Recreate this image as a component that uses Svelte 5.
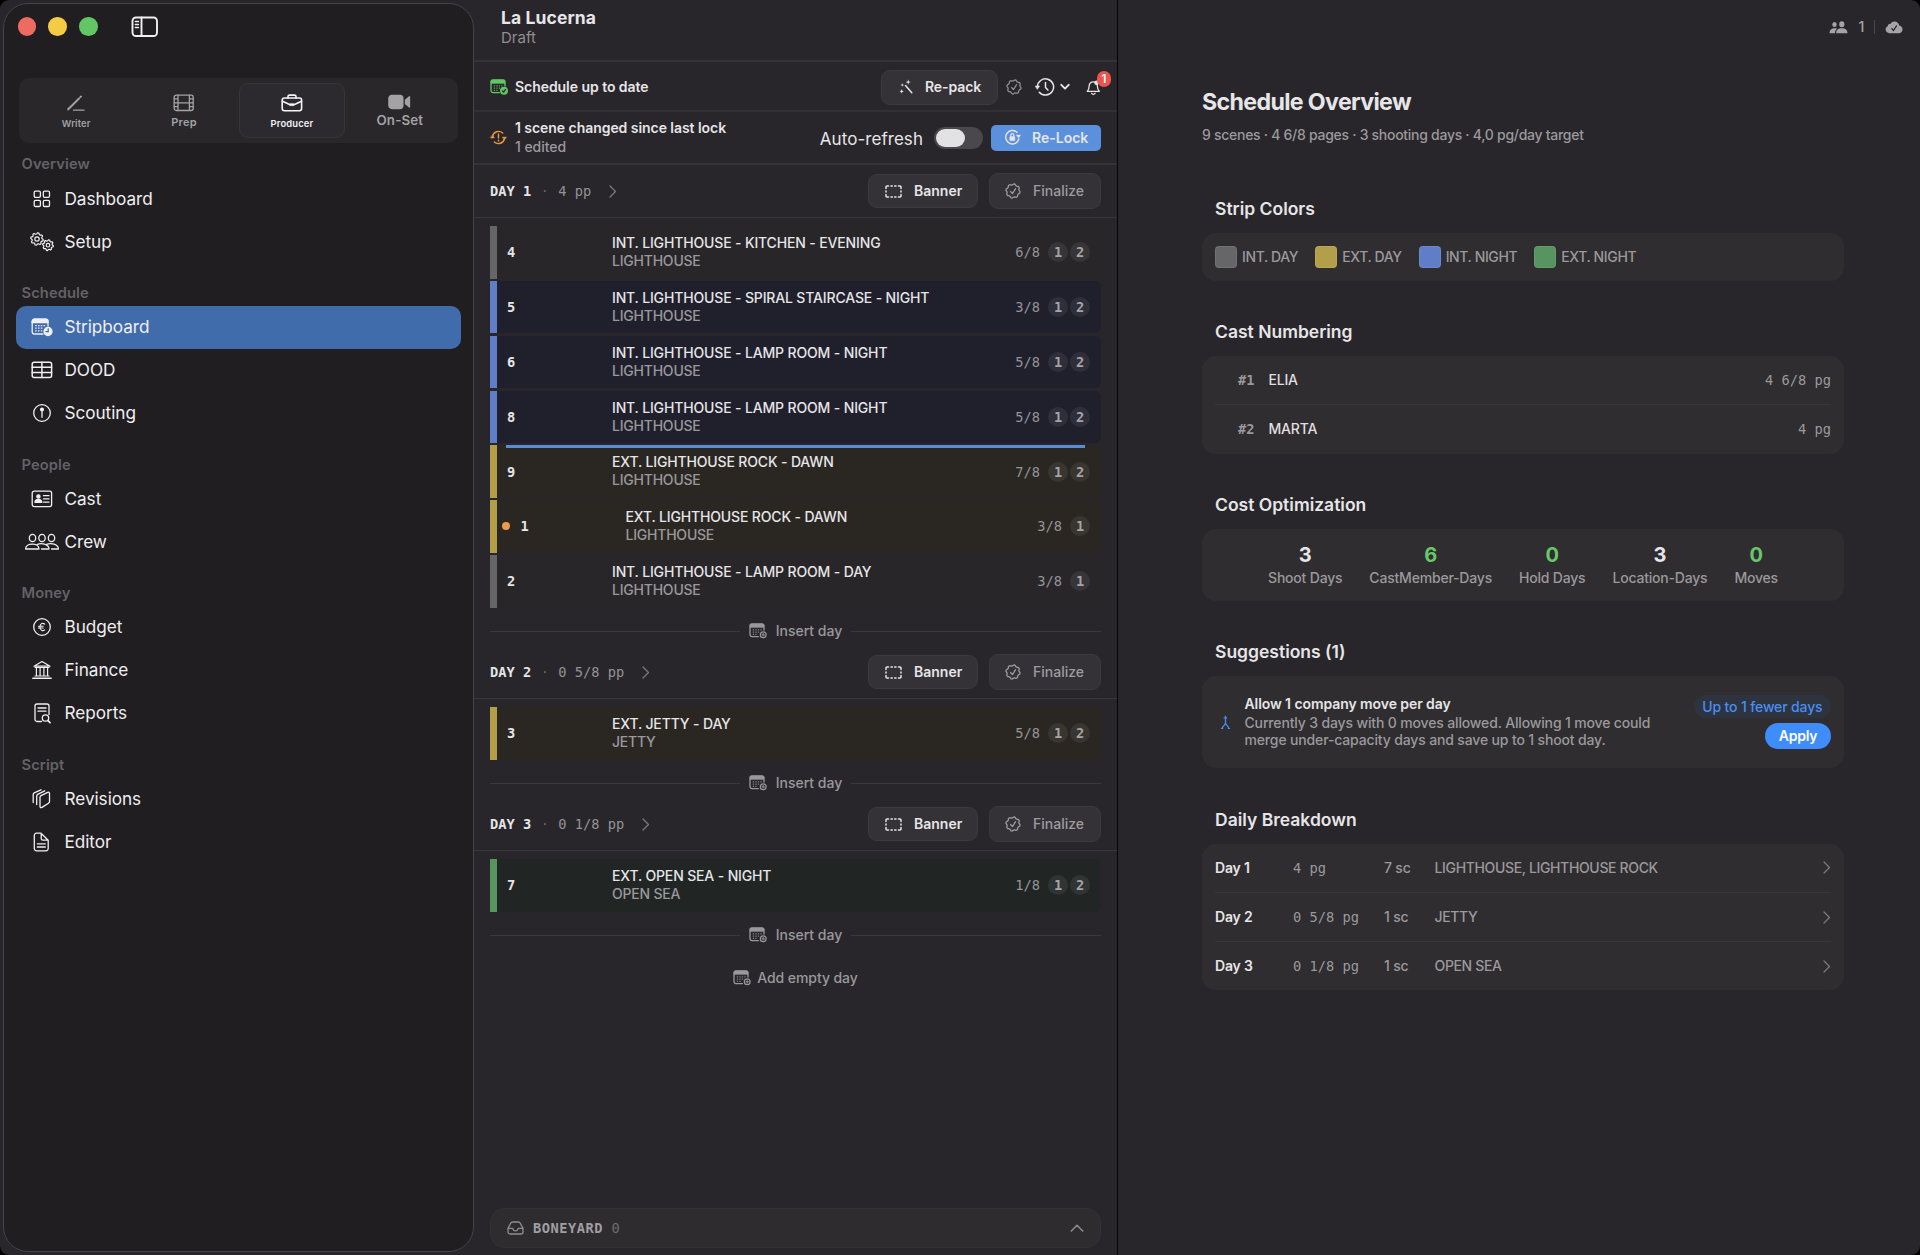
<script lang="ts">
  type Strip = {
    scene: string;
    title: string;
    location: string;
    pages: string;
    cast: number[];
    kind: 'int-day' | 'ext-day' | 'int-night' | 'ext-night';
    edited?: boolean;
    marker?: boolean;
  };

  const modes = [
    { id: 'writer', label: 'Writer' },
    { id: 'prep', label: 'Prep' },
    { id: 'producer', label: 'Producer' },
    { id: 'onset', label: 'On-Set' }
  ];

  const sections = [
    { title: 'Overview', items: ['Dashboard', 'Setup'] },
    { title: 'Schedule', items: ['Stripboard', 'DOOD', 'Scouting'] },
    { title: 'People', items: ['Cast', 'Crew'] },
    { title: 'Money', items: ['Budget', 'Finance', 'Reports'] },
    { title: 'Script', items: ['Revisions', 'Editor'] }
  ];

  const days: { name: string; pages: string; strips: Strip[] }[] = [
    {
      name: 'DAY 1',
      pages: '4 pp',
      strips: [
        { scene: '4', title: 'INT. LIGHTHOUSE - KITCHEN - EVENING', location: 'LIGHTHOUSE', pages: '6/8', cast: [1, 2], kind: 'int-day' },
        { scene: '5', title: 'INT. LIGHTHOUSE - SPIRAL STAIRCASE - NIGHT', location: 'LIGHTHOUSE', pages: '3/8', cast: [1, 2], kind: 'int-night' },
        { scene: '6', title: 'INT. LIGHTHOUSE - LAMP ROOM - NIGHT', location: 'LIGHTHOUSE', pages: '5/8', cast: [1, 2], kind: 'int-night' },
        { scene: '8', title: 'INT. LIGHTHOUSE - LAMP ROOM - NIGHT', location: 'LIGHTHOUSE', pages: '5/8', cast: [1, 2], kind: 'int-night' },
        { scene: '9', title: 'EXT. LIGHTHOUSE ROCK - DAWN', location: 'LIGHTHOUSE', pages: '7/8', cast: [1, 2], kind: 'ext-day', marker: true },
        { scene: '1', title: 'EXT. LIGHTHOUSE ROCK - DAWN', location: 'LIGHTHOUSE', pages: '3/8', cast: [1], kind: 'ext-day', edited: true },
        { scene: '2', title: 'INT. LIGHTHOUSE - LAMP ROOM - DAY', location: 'LIGHTHOUSE', pages: '3/8', cast: [1], kind: 'int-day' }
      ]
    },
    {
      name: 'DAY 2',
      pages: '0 5/8 pp',
      strips: [{ scene: '3', title: 'EXT. JETTY - DAY', location: 'JETTY', pages: '5/8', cast: [1, 2], kind: 'ext-day' }]
    },
    {
      name: 'DAY 3',
      pages: '0 1/8 pp',
      strips: [{ scene: '7', title: 'EXT. OPEN SEA - NIGHT', location: 'OPEN SEA', pages: '1/8', cast: [1, 2], kind: 'ext-night' }]
    }
  ];

  const legend = [
    { kind: 'int-day', label: 'INT. DAY' },
    { kind: 'ext-day', label: 'EXT. DAY' },
    { kind: 'int-night', label: 'INT. NIGHT' },
    { kind: 'ext-night', label: 'EXT. NIGHT' }
  ];

  const cast = [
    { number: '#1', name: 'ELIA', pages: '4 6/8 pg' },
    { number: '#2', name: 'MARTA', pages: '4 pg' }
  ];

  const costs = [
    { value: 3, label: 'Shoot Days', good: false },
    { value: 6, label: 'CastMember-Days', good: true },
    { value: 0, label: 'Hold Days', good: true },
    { value: 3, label: 'Location-Days', good: false },
    { value: 0, label: 'Moves', good: true }
  ];

  const breakdown = [
    { day: 'Day 1', pages: '4 pg', scenes: '7 sc', places: 'LIGHTHOUSE, LIGHTHOUSE ROCK' },
    { day: 'Day 2', pages: '0 5/8 pg', scenes: '1 sc', places: 'JETTY' },
    { day: 'Day 3', pages: '0 1/8 pg', scenes: '1 sc', places: 'OPEN SEA' }
  ];

  let mode = $state('producer');
  let page = $state('Stripboard');
  let autoRefresh = $state(false);

  // Outline of a cog (or scalloped seal) as a closed path
  function cog(cx: number, cy: number, outer: number, inner: number, teeth: number): string {
    const pts: string[] = [];
    for (let i = 0; i < teeth * 4; i++) {
      const r = i % 4 < 2 ? outer : inner;
      const a = ((i + 0.5) / (teeth * 4)) * Math.PI * 2;
      pts.push(`${(cx + r * Math.cos(a)).toFixed(2)} ${(cy + r * Math.sin(a)).toFixed(2)}`);
    }
    return 'M' + pts.join('L') + 'Z';
  }
</script>

{#snippet calendar(badge: string)}
  <svg class="ic" width="18" height="16" viewBox="0 0 18 16">
    <path d="M9.500 13.600H3A2 2 0 0 1 1 11.600V3a2 2 0 0 1 2-2h10a2 2 0 0 1 2 2v4" />
    <path class="fill" stroke-width=".6" d="M1 4.200V3a2 2 0 0 1 2-2h10a2 2 0 0 1 2 2v1.200z" />
    <path stroke-width="1" stroke-dasharray="1.300 1.200" d="M3.800 6.900h8.800M3.800 9.100h6.300M3.800 11.300h5" />
    {#if badge === 'plus'}
      <circle cx="14.200" cy="11.800" r="2.900" stroke-width="1.200" />
      <path stroke-width="1" d="M14.200 10.600v2.400M13 11.800h2.400" />
    {:else}
      <circle class="fill" cx="14" cy="11.700" r="3.300" />
      <path class="cut" d="M12.500 11.900l1.100 1.200 2-2.700" />
    {/if}
  </svg>
{/snippet}

{#snippet seal()}
  <svg class="ic" width="16" height="16" viewBox="0 0 16 16">
    <path d={cog(8, 8, 7.1, 6.1, 8)} />
    <path d="M5.500 8.400l1.900 2.200 3.200-4.900" />
  </svg>
{/snippet}

{#snippet chevron()}
  <svg class="ic chev" width="8" height="13" viewBox="0 0 8 13"><path d="M1 1l5.500 5.500L1 12" /></svg>
{/snippet}

{#snippet modeIcon(id: string)}
  {#if id === 'writer'}
    <svg class="ic" width="20" height="18" viewBox="0 0 20 18">
      <path stroke-width="1.900" d="M2.500 15L13 4.500M14.300 3.200l.8-.8" />
      <path d="M2 15.800l.4-1.600M7.500 16.200H18" />
    </svg>
  {:else if id === 'prep'}
    <svg class="ic" width="22" height="18" viewBox="0 0 22 18">
      <rect x="1.200" y="1.200" width="19" height="15.300" rx="2" />
      <path d="M5 1.200v15.300M16.400 1.200v15.300M5 8.800h11.400M1.200 4.900H5M1.200 8.800H5M1.200 12.700H5M16.400 4.900h3.800M16.400 8.800h3.800M16.400 12.700h3.800" />
    </svg>
  {:else if id === 'producer'}
    <svg class="ic" width="22" height="18" viewBox="0 0 22 18" stroke-width="1.600">
      <rect x="1.200" y="4" width="19.400" height="12.800" rx="2.200" />
      <path d="M7 4V2.600A1.500 1.500 0 0 1 8.500 1.100h5A1.500 1.500 0 0 1 15 2.600V4M1.500 7.200l7 3.300h5l7-3.300" />
      <path class="fill" stroke-width=".6" d="M9 9.800h4v1.800H9z" />
    </svg>
  {:else}
    <svg class="ic" width="23" height="16" viewBox="0 0 23 16">
      <rect class="fill" x="0.900" y="1.300" width="14" height="13.200" rx="3" />
      <path class="fill" d="M17.500 6l4-3.300v10.400l-4-3.300z" />
    </svg>
  {/if}
{/snippet}

{#snippet navIcon(name: string)}
  {#if name === 'Dashboard'}
    <svg class="ic" width="18" height="18" viewBox="0 0 18 18">
      <rect x="1.200" y="1.200" width="6.200" height="6.200" rx="1.300" />
      <rect x="10.300" y="1.200" width="6.200" height="6.200" rx="1.300" />
      <rect x="1.200" y="10.300" width="6.200" height="6.200" rx="1.300" />
      <rect x="10.300" y="10.300" width="6.200" height="6.200" rx="1.300" />
    </svg>
  {:else if name === 'Setup'}
    <svg class="ic" width="24" height="20" viewBox="0 0 24 20" stroke-width="1.200">
      <path d={cog(7, 7, 6.3, 5, 8)} />
      <circle cx="7" cy="7" r="2.200" />
      <path d={cog(18, 13.200, 5.4, 4.300, 8)} />
      <circle cx="18" cy="13.200" r="1.800" />
    </svg>
  {:else if name === 'Stripboard'}
    <svg class="ic" width="22" height="19" viewBox="0 0 22 19">
      <path d="M12 16H3.500A2.300 2.300 0 0 1 1.200 13.700V3.500A2.300 2.300 0 0 1 3.500 1.200h11.200A2.300 2.300 0 0 1 17 3.500V8" />
      <path class="fill" d="M1.200 4.600V3.500A2.300 2.300 0 0 1 3.500 1.200h11.200A2.300 2.300 0 0 1 17 3.500v1.100z" />
      <path stroke-dasharray="1.500 1.300" d="M4.200 7.600h10M4.200 10.200h8M4.200 12.800h7" />
      <circle class="fill" cx="17" cy="13.500" r="4" />
      <path class="cut" d="M17.200 10.800v2.900H15" />
    </svg>
  {:else if name === 'DOOD'}
    <svg class="ic" width="22" height="18" viewBox="0 0 22 18" stroke-width="1.500">
      <rect x="1.200" y="1.200" width="19.400" height="15.400" rx="2" />
      <path d="M1.200 6.200h19.400M1.200 11.400h19.400M10.900 1.200v15.400" />
    </svg>
  {:else if name === 'Scouting'}
    <svg class="ic" width="20" height="20" viewBox="0 0 20 20">
      <circle cx="10" cy="10" r="8.300" />
      <circle class="fill" cx="10" cy="6.500" r="1.400" />
      <path d="M10 7v7.300" />
    </svg>
  {:else if name === 'Cast'}
    <svg class="ic" width="22" height="18" viewBox="0 0 22 18">
      <rect x="1.200" y="1.200" width="19.400" height="15.400" rx="2" />
      <circle class="fill" cx="7.400" cy="6.500" r="1.600" />
      <path class="fill" d="M4 12.300c0-4 6.800-4 6.800 0z" />
      <path d="M12.500 5.700h5.500M12.500 8.900h5.500M12.500 12.100h5.500" />
    </svg>
  {:else if name === 'Crew'}
    <svg class="ic" width="36" height="18" viewBox="0 0 36 18">
      <ellipse cx="8.500" cy="5" rx="3.200" ry="3.700" />
      <ellipse cx="18" cy="5" rx="3.200" ry="3.700" />
      <ellipse cx="27.500" cy="5" rx="3.200" ry="3.700" />
      <path d="M1.600 16c0-6.500 13.400-6.500 13.400 0zM12.800 11.800C17 9.300 25 11 25 16h-7.500M22 11.600C27 9.300 34.400 11 34.400 16H27.500" />
    </svg>
  {:else if name === 'Budget'}
    <svg class="ic" width="20" height="20" viewBox="0 0 20 20">
      <circle cx="10" cy="10" r="8.300" />
      <path d="M12.700 7.200c-1.600-1.500-4.600-1-4.800 2.800.2 3.800 3.200 4.300 4.800 2.800M6.500 9.200h4.700M6.500 11h4.700" stroke-width="1.100" />
    </svg>
  {:else if name === 'Finance'}
    <svg class="ic" width="20" height="20" viewBox="0 0 20 20">
      <path d="M2 6.200L10 1.500l8 4.700zM3 7.500h14M4.400 8v8M8.100 8v8M11.900 8v8M15.600 8v8M3 16h14" stroke-width="1.200" />
      <path d="M.8 18.300h18.400" stroke-width="1.500" />
    </svg>
  {:else if name === 'Reports'}
    <svg class="ic" width="18" height="21" viewBox="0 0 18 21">
      <path d="M8.500 18.500H4a2 2 0 0 1-2-2V3a2 2 0 0 1 2-2h10a2 2 0 0 1 2 2v8.500M5 5h8M5 8.200h8" />
      <circle cx="12.500" cy="15" r="3.200" />
      <path stroke-width="1.700" d="M14.900 17.500l2.100 2.200" />
    </svg>
  {:else if name === 'Revisions'}
    <svg class="ic" width="19" height="20" viewBox="0 0 19 20">
      <path d="M8 8.200c0-.8.400-1.300 1-1.600l6.700-3.200c1-.5 1.800 0 1.800 1v8.200c0 .8-.4 1.300-1 1.600L10 18.400c-1.100.6-2 .1-2-.9z" />
      <path d="M4.700 15.500V7c0-.8.400-1.300 1-1.600l7-3.500M1.200 13.500V5.400c0-.8.400-1.300 1-1.600L9 .8" />
    </svg>
  {:else}
    <svg class="ic" width="17" height="20" viewBox="0 0 17 20">
      <path d="M3.500 1.200H8l7.200 7V16.600a2.200 2.200 0 0 1-2.200 2.200H3.500a2.200 2.200 0 0 1-2.200-2.200V3.400a2.200 2.200 0 0 1 2.200-2.200zM8.200 1.500V6.500a1.700 1.700 0 0 0 1.700 1.700h5M4.300 11.800h8M4.300 15h8" />
    </svg>
  {/if}
{/snippet}

<div class="window">
  <aside class="sidebar">
    <div class="titlebar">
      <span class="light red"></span>
      <span class="light yellow"></span>
      <span class="light green"></span>
      <svg class="ic toggle-sidebar" width="28" height="22" viewBox="0 0 28 22">
        <rect x="1.500" y="1.500" width="24.500" height="18.500" rx="3.500" />
        <path d="M10.500 1.500V20" />
        <path stroke-width="1.400" d="M4.300 5.500h3.200M4.300 8.500h3.200M4.300 11.500h3.200" />
      </svg>
    </div>

    <div class="modes">
      {#each modes as m (m.id)}
        <button class="mode {m.id}" class:active={mode === m.id} onclick={() => (mode = m.id)}>
          {@render modeIcon(m.id)}
          <span>{m.label}</span>
        </button>
      {/each}
    </div>

    <nav>
      {#each sections as section (section.title)}
        <h4>{section.title}</h4>
        {#each section.items as item (item)}
          <button class="nav-row" class:active={page === item} onclick={() => (page = item)}>
            <span class="nav-icon">{@render navIcon(item)}</span>
            <span>{item}</span>
          </button>
        {/each}
      {/each}
    </nav>
  </aside>

  <main class="board">
    <header class="project">
      <h1>La Lucerna</h1>
      <p>Draft</p>
    </header>

    <div class="bar status">
      <span class="status-icon ok">{@render calendar('check')}</span>
      <strong class="grow">Schedule up to date</strong>
      <button class="btn repack">
        <svg class="ic" width="16" height="16" viewBox="0 0 16 16">
          <path stroke-width="1.500" d="M7.500 6.500l6.300 7.300" />
          <path class="fill" stroke-width=".1" d="M10.200.8l.6 1.700 1.700.6-1.700.6-.6 1.700-.6-1.700-1.700-.6 1.700-.6zM4.300 4.400l.4 1.200 1.200.4-1.200.4-.4 1.200-.4-1.200L2.700 6l1.200-.4zM3.600 10.300l.6 1.500 1.500.5-1.500.6-.6 1.500-.5-1.500-1.500-.6 1.500-.5z" />
        </svg>
        <span>Re-pack</span>
      </button>
      <span class="dim tool-seal">{@render seal()}</span>
      <svg class="ic tool-clock" width="20" height="20" viewBox="0 0 20 20" stroke-width="1.500">
        <path d="M2.400 10a8.100 8.100 0 1 1 1.900 5.200M10.500 5.500v5l2.400 2.600" />
        <path class="fill" stroke-width=".5" d="M.2 9h4.500l-2.200 3.200z" />
      </svg>
      <svg class="ic tool-down" width="10" height="8" viewBox="0 0 10 8" stroke-width="1.900"><path d="M1.300 1.800L5 5.600l3.700-3.800" /></svg>
      <span class="bell">
        <svg class="ic" width="15" height="17" viewBox="0 0 15 17">
          <path d="M1.300 12.300c1.500-1.400 1.800-2.500 1.800-5C3.100 4.500 5 2.800 7.300 2.800s4.100 1.700 4.100 4.500c0 2.500.4 3.600 1.900 5zM5.600 14.300c.6 1.300 2.900 1.300 3.500 0" />
          <circle class="fill" cx="10.500" cy="3.800" r="1.600" />
        </svg>
        <span class="count">1</span>
      </span>
    </div>

    <div class="bar lock">
      <svg class="ic status-icon warn" width="17" height="17" viewBox="0 0 17 17" stroke-width="1.400">
        <path d="M2.500 7.500A6.200 6.200 0 0 1 12.700 4M14.500 9.500A6.200 6.200 0 0 1 4.300 13M8.500 5v4M8.500 11.300v.7" />
        <path class="fill" stroke-width=".4" d="M.4 9h4.200L2.500 6.200zM12.400 8h4.200l-2.100 2.800z" />
      </svg>
      <div class="grow lock-text">
        <strong>1 scene changed since last lock</strong>
        <span>1 edited</span>
      </div>
      <span class="auto">Auto-refresh</span>
      <button class="switch" class:on={autoRefresh} aria-label="Auto-refresh" onclick={() => (autoRefresh = !autoRefresh)}>
        <span class="knob"></span>
      </button>
      <button class="relock">
        <svg class="ic" width="17" height="17" viewBox="0 0 17 17" stroke-width="1.400">
          <path d="M13 3.300A6.700 6.700 0 1 0 14.900 10" />
          <path class="fill" stroke-width=".4" d="M12.400 6h4.200l-2 3z" />
          <rect class="fill" stroke-width=".4" x="5.700" y="7.600" width="5.200" height="4.200" rx=".8" />
          <path stroke-width="1.200" d="M6.800 7.600V6.200a1.500 1.500 0 0 1 3 0v1.400" />
        </svg>
        <span>Re-Lock</span>
      </button>
    </div>

    {#each days as day (day.name)}
      <div class="day-head">
        <b class="mono">{day.name}</b>
        <span class="dot">·</span>
        <span class="mono pp">{day.pages}</span>
        {@render chevron()}
        <span class="grow"></span>
        <button class="btn banner">
          <svg class="ic" width="17" height="13" viewBox="0 0 17 13" stroke-width="1.500">
            <path d="M1 3.500V2a1 1 0 0 1 1-1h1.500M13.500 1H15a1 1 0 0 1 1 1v1.500M16 9.500V11a1 1 0 0 1-1 1h-1.500M3.500 12H2a1 1 0 0 1-1-1V9.500M6 1h1.300M9.700 1H11M6 12h1.300M9.700 12H11M1 6v1M16 6v1" />
          </svg>
          <span>Banner</span>
        </button>
        <button class="btn finalize">
          {@render seal()}
          <span>Finalize</span>
        </button>
      </div>
      <div class="strips">
        {#each day.strips as strip (strip.scene)}
          <div class="strip {strip.kind}">
            <span class="tab"></span>
            {#if strip.marker}<span class="marker"></span>{/if}
            {#if strip.edited}<span class="edited"></span>{/if}
            <b class="mono scene">{strip.scene}</b>
            <div class="slug">
              <span class="title">{strip.title}</span>
              <span class="place">{strip.location}</span>
            </div>
            <span class="mono eighths">{strip.pages}</span>
            {#each strip.cast as c (c)}
              <b class="mono chip">{c}</b>
            {/each}
          </div>
        {/each}
      </div>
      <div class="insert">
        <hr />
        <button>{@render calendar('plus')}<span>Insert day</span></button>
        <hr />
      </div>
    {/each}

    <button class="add-day">{@render calendar('plus')}<span>Add empty day</span></button>

    <div class="boneyard">
      <svg class="ic" width="17" height="14" viewBox="0 0 17 14">
        <path d="M1 7.400L3.700 2.200C4.100 1.400 4.700 1 5.600 1h5.800c.9 0 1.500.4 1.900 1.200L16 7.400V11a2 2 0 0 1-2 2H3a2 2 0 0 1-2-2zM1 7.400h4.300c.6 0 .8.300.9.900.4 2 4.200 2 4.600 0 .1-.6.300-.9.900-.9H16" />
      </svg>
      <b class="mono">BONEYARD</b>
      <span class="mono zero grow">0</span>
      <svg class="ic" width="14" height="8" viewBox="0 0 14 8" stroke-width="1.500"><path d="M1.300 7L7 1.200 12.700 7" /></svg>
    </div>
  </main>

  <section class="detail">
    <div class="presence">
      <svg class="people" width="19" height="13" viewBox="0 0 19 13">
        <ellipse cx="5.500" cy="3.500" rx="2.200" ry="2.600" />
        <ellipse cx="12.800" cy="3.200" rx="2.600" ry="3" />
        <path d="M.5 12.300C.5 8.500 3 7.200 5.700 7.200c.9 0 1.700.1 2.300.5-1.300 1-2 2.600-2 4.600zM7.200 12.300c0-3.800 2.600-5 5.600-5s5.700 1.200 5.700 5z" />
      </svg>
      <span class="online">1</span>
      <span class="sep"></span>
      <svg class="people" width="18" height="13" viewBox="0 0 18 13">
        <path d="M4 12.300a3.700 3.700 0 0 1-1.300-7C2.800 3.600 4 2.700 5.500 2.900 6.300 1.200 7.700.4 9.400.4c2.700 0 4.500 1.800 4.800 4.200 1.900.2 3.300 1.700 3.300 3.800 0 2.300-1.600 3.900-4 3.900z" />
        <path class="tick" d="M6.500 7.300l2 2.200 3.300-5" />
      </svg>
    </div>

    <div class="overview">
      <h2>Schedule Overview</h2>
      <p class="summary">9 scenes · 4 6/8 pages · 3 shooting days · 4,0 pg/day target</p>

      <h3>Strip Colors</h3>
      <div class="card legend">
        {#each legend as l (l.kind)}
          <span class="key"><i class="swatch {l.kind}"></i>{l.label}</span>
        {/each}
      </div>

      <h3>Cast Numbering</h3>
      <div class="card">
        {#each cast as c (c.number)}
          <div class="line">
            <b class="mono num">{c.number}</b>
            <span class="name">{c.name}</span>
            <span class="mono">{c.pages}</span>
          </div>
        {/each}
      </div>

      <h3>Cost Optimization</h3>
      <div class="card costs">
        {#each costs as c (c.label)}
          <div class="cost">
            <b class:good={c.good}>{c.value}</b>
            <span>{c.label}</span>
          </div>
        {/each}
      </div>

      <h3>Suggestions (1)</h3>
      <div class="card suggestion">
        <svg class="ic" width="11" height="15" viewBox="0 0 11 15">
          <path d="M5.500 2v6c0 1.800-2.600 2.800-3.100 5M5.500 8c0 1.800 2.600 2.800 3.100 5M1.500 13.400h1.200M8.300 13.400h1.200" />
          <path class="fill" stroke-width=".3" d="M3.800 3.400h3.400L5.500.8z" />
        </svg>
        <div class="advice">
          <strong>Allow 1 company move per day</strong>
          <span>Currently 3 days with 0 moves allowed. Allowing 1 move could</span>
          <span>merge under-capacity days and save up to 1 shoot day.</span>
        </div>
        <div class="actions">
          <span class="pill">Up to 1 fewer days</span>
          <button class="apply">Apply</button>
        </div>
      </div>

      <h3>Daily Breakdown</h3>
      <div class="card">
        {#each breakdown as b (b.day)}
          <div class="line daily">
            <b>{b.day}</b>
            <span class="mono">{b.pages}</span>
            <span>{b.scenes}</span>
            <span class="places">{b.places}</span>
            {@render chevron()}
          </div>
        {/each}
      </div>
    </div>
  </section>
</div>

<style>
  :global(body) {
    background: #000;
  }

  .window {
    display: flex;
    box-sizing: border-box;
    width: 1920px;
    height: 1255px;
    border-radius: 9px;
    overflow: hidden;
    background: #28262a;
    color: #e6e5e7;
    font-family: Inter, 'Liberation Sans', sans-serif;
    font-size: 14px;
    line-height: 18px;
    stroke-width: 1.3;
  }

  .window * {
    box-sizing: border-box;
  }

  h1, h2, h3, h4, p {
    margin: 0;
  }

  button {
    margin: 0;
    padding: 0;
    border: 0;
    background: none;
    color: inherit;
    font: inherit;
    letter-spacing: inherit;
    white-space: nowrap;
  }

  strong {
    font-weight: 600;
    letter-spacing: -.05px;
  }

  .grow {
    flex: 1;
  }

  .mono {
    font-family: 'DejaVu Sans Mono', monospace;
    font-size: 13.700px;
    letter-spacing: 0;
    white-space: pre;
  }

  .ic {
    flex: none;
    fill: none;
    stroke: currentColor;
    stroke-linecap: round;
    stroke-linejoin: round;
  }

  .ic [stroke-dasharray] {
    stroke-linecap: butt;
  }

  .ic .fill {
    fill: currentColor;
  }

  .ic .cut {
    stroke: #28262a;
  }

  /* sidebar */
  .sidebar {
    flex: none;
    width: 471px;
    height: 1249px;
    margin: 3px 0 0 3px;
    border: 1px solid #464448;
    border-radius: 25px;
    background: #201e21;
    color: #f0eff1;
  }

  .titlebar {
    display: flex;
    align-items: center;
    height: 45px;
    padding-left: 13.500px;
    gap: 12.300px;
  }

  .light {
    width: 18.500px;
    height: 18.500px;
    border-radius: 50%;
  }

  .red { background: #ee6b62; }
  .yellow { background: #f3cb45; }
  .green { background: #62c665; }

  .toggle-sidebar {
    margin-left: 21.500px;
    stroke-width: 1.900;
  }

  .modes {
    display: flex;
    width: 439px;
    height: 65px;
    margin: 29px 0 0 14.500px;
    padding: 5px 5px 5px 5px;
    gap: 2.500px;
    border-radius: 10px;
    background: #29272a;
    color: #a3a2a4;
    font-weight: 600;
  }

  .mode {
    flex: 1;
    display: flex;
    flex-direction: column;
    align-items: center;
    padding-top: 10px;
    border: 1px solid transparent;
    border-radius: 9px;
  }

  .mode span { line-height: 14px; margin-top: 3px; }
  .mode.active { border-color: #37353a; background: #2c2a2e; color: #f4f3f5; }
  .writer span { font-size: 9.400px; letter-spacing: .15px; margin-top: 4.500px; }
  .prep span { font-size: 11px; letter-spacing: .3px; }
  .producer span { font-size: 9.400px; letter-spacing: .15px; margin-top: 4.500px; }
  .onset span { font-size: 13.300px; letter-spacing: .15px; }

  nav {
    padding: .4px 12px 0;
  }

  h4 {
    height: 42.860px;
    padding: 21px 0 0 5.500px;
    color: #646266;
    font-size: 14.700px;
    font-weight: 600;
    line-height: 18px;
    letter-spacing: .1px;
  }

  h4:first-child {
    height: 34px;
    padding-top: 12px;
  }

  .nav-row {
    display: flex;
    align-items: center;
    width: 445px;
    height: 42.860px;
    border-radius: 10px;
    font-size: 17.200px;
    letter-spacing: -.05px;
    text-align: left;
  }

  .nav-row.active {
    background: #406cab;
  }

  .nav-icon {
    display: flex;
    justify-content: center;
    width: 36px;
    margin: 0 5px 0 7.500px;
  }

  .nav-row .cut {
    stroke: #406cab;
  }

  /* stripboard column */
  .board {
    display: flex;
    flex-direction: column;
    flex: none;
    width: 643px;
  }

  .project {
    height: 62px;
    padding: 7px 0 0 27px;
    border-bottom: 2px solid #353337;
  }

  h1 {
    font-size: 17.500px;
    font-weight: 700;
    line-height: 22px;
    letter-spacing: .1px;
  }

  .project p {
    color: #8f8d91;
    font-size: 15px;
    line-height: 17px;
  }

  .bar {
    display: flex;
    align-items: center;
    padding: 0 16px;
  }

  .status {
    height: 50px;
    padding: 2px 14px 0 16px;
    border-bottom: 2px solid #323034;
  }

  .status-icon {
    display: flex;
    margin-right: 7px;
  }

  .ok { color: #5fc963; }
  .warn { color: #e9963e; margin-right: 8px; }

  .btn {
    display: flex;
    align-items: center;
    border: 1px solid #3c3a3e;
    border-radius: 9px;
    background: #343236;
    font-weight: 600;
  }

  .repack {
    width: 117px;
    height: 35px;
    padding-left: 16px;
    gap: 11px;
    letter-spacing: -.1px;
  }

  .dim {
    display: flex;
    color: #8f8d91;
  }

  .tool-seal { margin-left: 8px; }
  .tool-clock { margin-left: 13px; }
  .tool-down { margin-left: 5px; }

  .bell {
    position: relative;
    display: flex;
    margin: 0 2px 0 16px;
  }

  .count {
    position: absolute;
    left: 11px;
    top: -8px;
    width: 14px;
    height: 16px;
    border-radius: 8px;
    background: #ea5550;
    color: #fff;
    font-size: 11.500px;
    font-weight: 600;
    line-height: 16px;
    text-align: center;
  }

  .lock {
    height: 53px;
    border-bottom: 2px solid #353337;
  }

  .lock-text {
    display: flex;
    flex-direction: column;
  }

  .lock-text strong { line-height: 18px; }
  .lock-text span { color: #9b999d; line-height: 19px; font-weight: 500; letter-spacing: -.05px; }

  .auto {
    padding-top: 2px;
    font-size: 17px;
    letter-spacing: .05px;
  }

  .switch {
    width: 49px;
    height: 22px;
    margin: 0 8px 0 11px;
    padding: 2px;
    border-radius: 11px;
    background: #4a484c;
  }

  .knob {
    display: block;
    width: 29px;
    height: 18px;
    border-radius: 9px;
    background: #e2e1e3;
  }

  .switch.on { background: #3f8cf7; }
  .switch.on .knob { margin-left: auto; }

  .relock {
    display: flex;
    align-items: center;
    width: 110px;
    height: 26px;
    padding-left: 13px;
    gap: 11px;
    border-radius: 5px;
    background: #5a90dc;
    font-weight: 600;
  }

  .day-head {
    display: flex;
    align-items: center;
    flex: none;
    height: 53px;
    padding: 0 16px;
    border-bottom: 1px solid #39373b;
  }

  .dot { width: 27px; text-align: center; color: #7b797d; }
  .pp { color: #949296; margin-right: 18px; }
  .chev { color: #7b797d; }

  .banner {
    width: 110px;
    height: 34px;
    margin-right: 11px;
    padding-left: 16px;
    gap: 12px;
  }

  .finalize {
    width: 112px;
    height: 36px;
    padding-left: 15px;
    gap: 12px;
    color: #9d9b9f;
    font-weight: 500;
  }

  .strips {
    display: flex;
    flex-direction: column;
    gap: 2.350px;
    padding: 8px 16px 0;
  }

  .strip {
    position: relative;
    display: flex;
    align-items: center;
    height: 52.500px;
    padding-right: 11px;
    border-radius: 0 6px 6px 0;
  }

  .tab {
    width: 7px;
    height: 100%;
    margin-right: 5px;
  }

  .int-day .tab, .swatch.int-day { background: #666567; }
  .ext-day .tab, .swatch.ext-day { background: #b39f49; }
  .int-night .tab, .swatch.int-night { background: #607dc8; }
  .ext-night .tab, .swatch.ext-night { background: #579460; }

  .strip.int-day { background: #282628; }
  .strip.ext-day { background: #2a2722; }
  .strip.int-night { background: #20202d; }
  .strip.ext-night { background: #212625; }

  .marker {
    position: absolute;
    left: 16px;
    right: 16px;
    top: 0;
    height: 3px;
    background: #5a8dd4;
  }

  .edited {
    width: 8px;
    height: 8px;
    margin-right: 5.500px;
    border-radius: 50%;
    background: #ee9a4c;
  }

  .scene {
    width: 110px;
    padding-left: 5px;
  }

  .slug {
    flex: 1;
    display: flex;
    flex-direction: column;
    padding-bottom: 1.500px;
  }

  .slug .title { font-weight: 500; line-height: 19px; letter-spacing: -.15px; }
  .slug .place { color: #9a989c; font-weight: 500; letter-spacing: -.22px; }
  .eighths { margin-right: 8px; color: #959397; }

  .chip {
    width: 20px;
    height: 20px;
    margin-left: 2px;
    border-radius: 50%;
    background: rgba(255, 255, 255, .07);
    color: #a5a3a7;
    line-height: 20px;
    text-align: center;
  }

  .eighths + .chip { margin-left: 0; }

  .insert {
    display: flex;
    align-items: center;
    flex: none;
    height: 38.500px;
    padding: 8.500px 16px 0;
    gap: 9px;
  }

  hr {
    flex: 1;
    margin: 0;
    border: 0;
    border-top: 1px solid #3b393d;
  }

  .insert button, .add-day {
    display: flex;
    align-items: center;
    gap: 9px;
    color: #9a989c;
    font-weight: 500;
  }

  .add-day {
    align-self: center;
    height: 30px;
    margin-top: 13px;
    gap: 6px;
    letter-spacing: -.08px;
  }

  .boneyard {
    display: flex;
    align-items: center;
    height: 40px;
    margin: auto 16px 7px;
    padding: 0 16px;
    border: 1px solid #333135;
    border-radius: 14px;
    background: #2e2c2f;
    color: #8f8d91;
  }

  .boneyard b { margin: 0 8.500px 0 9px; color: #a09ea2; letter-spacing: .5px; }
  .zero { color: #6f6d71; }

  /* overview column */
  .detail {
    flex: 1;
    border-left: 1px solid #060506;
    font-weight: 500;
    letter-spacing: -.2px;
  }

  .presence {
    display: flex;
    justify-content: flex-end;
    align-items: center;
    height: 54px;
    padding-right: 17px;
    color: #a5a3a7;
  }

  .people { fill: currentColor; }
  .tick { fill: none; stroke: #28262a; }
  .online { margin: 0 10px; }
  .sep { width: 1px; height: 14px; margin-right: 10px; background: #4a484c; }

  .overview {
    width: 642px;
    margin: 34px 0 0 84px;
  }

  h2 {
    height: 28px;
    font-size: 23.200px;
    font-weight: 700;
    line-height: 28px;
    letter-spacing: -.65px;
  }

  .summary {
    height: 18px;
    margin: 10px 0 0;
    color: #9b999d;
    letter-spacing: -.28px;
  }

  h3 {
    height: 24px;
    margin: 39.500px 0 12px 13px;
    font-size: 17.500px;
    font-weight: 600;
    line-height: 24px;
    letter-spacing: 0;
  }

  .summary + h3 { margin-top: 52.500px; }

  .card {
    padding: 0 13px;
    border-radius: 14px;
    background: #2f2d2f;
    color: #9b999d;
  }

  .legend {
    display: flex;
    align-items: center;
    height: 48px;
    gap: 17px;
    letter-spacing: -.37px;
  }

  .key {
    display: flex;
    align-items: center;
    gap: 5px;
  }

  .swatch {
    width: 22px;
    height: 22px;
    border: 1px solid rgba(255, 255, 255, .08);
    border-radius: 4px;
  }

  .line {
    display: flex;
    align-items: center;
    height: 49.300px;
    border-bottom: 1px solid #39373a;
  }

  .line:last-child { height: 48.300px; border-bottom: 0; }
  .num { width: 53.500px; padding-left: 23px; }
  .name { flex: 1; color: #e0dfe1; }

  .costs {
    display: flex;
    align-items: center;
    justify-content: center;
    height: 71.500px;
    gap: 27px;
  }

  .cost {
    display: flex;
    flex-direction: column;
    align-items: center;
  }

  .cost b { font-size: 20px; line-height: 26px; color: #e6e5e7; }
  .cost b.good { color: #67c76a; }
  .cost span { line-height: 20px; }

  .suggestion {
    display: flex;
    align-items: center;
    height: 92px;
    color: #9b999d;
  }

  .suggestion .ic { margin: 0 13.500px 0 5px; color: #4a8df0; }

  .advice {
    flex: 1;
    display: flex;
    flex-direction: column;
    padding-bottom: 3px;
    line-height: 17.500px;
    letter-spacing: -.15px;
  }

  .advice strong { color: #e6e5e7; line-height: 21px; letter-spacing: -.08px; }

  .actions {
    display: flex;
    flex-direction: column;
    align-items: flex-end;
    gap: 5px;
  }

  .pill {
    padding: 0 8.500px;
    border-radius: 12px;
    background: #2d3440;
    color: #4a8df0;
    line-height: 23px;
    letter-spacing: -.14px;
    white-space: nowrap;
  }

  .apply {
    width: 66px;
    height: 26px;
    border-radius: 13px;
    background: #3f8dfb;
    color: #fff;
    font-weight: 600;
  }

  .daily {
    display: grid;
    grid-template-columns: 78px 91px 50.500px 1fr auto;
  }

  .daily b { color: #e6e5e7; font-weight: 600; letter-spacing: -.2px; }
  .places { letter-spacing: -.35px; }

  /* tabular figures keep their regular weight */
  .detail span.mono { font-weight: 400; }
</style>
